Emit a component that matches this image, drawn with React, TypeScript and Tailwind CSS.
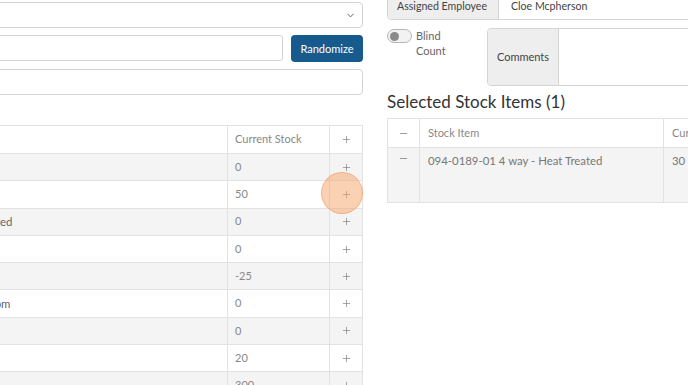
import { ChevronDown, Plus, Minus } from 'lucide-react'

const rows = [
  { name: '094-0101 Pallet', stock: '0' },
  { name: '094-0142 Pallet', stock: '50' },
  { name: '094-0189-01 4 way - Heat Treated', stock: '0' },
  { name: '094-0190', stock: '0' },
  { name: '094-0201', stock: '-25' },
  { name: '094-0189-02 4-way Pallet Bottom', stock: '0' },
  { name: '094-0310', stock: '0' },
  { name: '094-0311', stock: '20' },
  { name: '094-0400', stock: '300' },
]

export default function App() {
  return (
    <div className="relative w-[688px] h-[385px] overflow-hidden bg-white font-['Lato','Open_Sans',sans-serif] text-[#555]">
      <div className="flex ml-[-171px] w-[1100px]">
        {/* Left column */}
        <div className="w-[534px] shrink-0 pt-[2px]">
          <div className="h-[26px] border border-[#d4d4d4] rounded-[4px] flex items-center justify-end pr-[6px]">
            <ChevronDown className="h-[11px] w-[11px] text-[#555]" strokeWidth={2} />
          </div>
          <div className="mt-[7px] flex gap-[8px]">
            <div className="flex-1 h-[26px] border border-[#d4d4d4] rounded-[3px]" />
            <button className="w-[72px] h-[27px] rounded-[4px] bg-[#175a8e] text-white text-[11px] leading-none">
              Randomize
            </button>
          </div>
          <div className="mt-[7px] h-[26px] border border-[#d4d4d4] rounded-[4px]" />

          <div className="mt-[30px] border border-[#e2e2e2]">
            <div className="flex h-[28px] bg-white border-b border-[#e2e2e2]">
              <div className="flex-1" />
              <div className="w-[102px] border-l border-[#e2e2e2] flex items-center pl-[7px] text-[11px] text-[#888]">
                Current Stock
              </div>
              <div className="w-[33px] border-l border-[#e2e2e2] flex items-center justify-center text-[#777]">
                <Plus className="h-[11px] w-[11px]" strokeWidth={1.4} />
              </div>
            </div>
            {rows.map((r, i) => (
              <div
                key={i}
                className={`flex h-[27.3px] border-b border-[#e2e2e2] ${i % 2 === 0 ? 'bg-[#f4f4f4]' : 'bg-white'}`}
              >
                <div className="flex-1 flex items-center pl-[8px] text-[11.4px] text-[#666] whitespace-nowrap">
                  {r.name}
                </div>
                <div className="w-[102px] border-l border-[#e2e2e2] flex items-center pl-[7px] text-[11px] text-[#888]">
                  {r.stock}
                </div>
                <div className="w-[33px] border-l border-[#e2e2e2] flex items-center justify-center text-[#777]">
                  <Plus className="h-[11px] w-[11px]" strokeWidth={1.4} />
                </div>
              </div>
            ))}
          </div>
        </div>

        {/* Right column */}
        <div className="ml-[24px] w-[440px] shrink-0 mt-[-6px]">
          <div className="flex h-[26px] border border-[#d4d4d4] rounded-[4px] text-[10.6px] text-[#444]">
            <div className="w-[111px] bg-[#eeeeee] border-r border-[#d4d4d4] flex items-center pl-[9px] rounded-l-[4px]">
              Assigned Employee
            </div>
            <div className="flex-1 flex items-center pl-[12px]">Cloe Mcpherson</div>
          </div>

          <div className="mt-[8px] flex">
            <div className="w-[100px] flex items-start">
              <div className="mt-[1px] w-[25px] h-[14px] rounded-full border border-[#b5b5b5] bg-[#f2f2f2] flex items-center pl-[2px]">
                <div className="w-[9px] h-[9px] rounded-full bg-[#8a8a8a]" />
              </div>
              <div className="ml-[4px] text-[11px] leading-[15px] text-[#666]">
                <div>Blind</div>
                <div>Count</div>
              </div>
            </div>
            <div className="flex h-[58px] flex-1 border border-[#d4d4d4] rounded-[4px]">
              <div className="w-[71px] bg-[#eeeeee] border-r border-[#d4d4d4] rounded-l-[4px] flex items-center justify-center text-[11px] text-[#444]">
                Comments
              </div>
              <div className="flex-1" />
            </div>
          </div>

          <h2 className="mt-[5px] text-[17px] leading-[22px] text-[#333] font-normal">Selected Stock Items (1)</h2>

          <div className="mt-[5px] border border-[#e2e2e2]">
            <div className="flex h-[29px] border-b border-[#e2e2e2] bg-white">
              <div className="w-[31px] flex items-center justify-center text-[#777]">
                <Minus className="h-[11px] w-[11px]" strokeWidth={1.6} />
              </div>
              <div className="w-[244px] border-l border-[#e2e2e2] flex items-center pl-[8px] text-[11px] text-[#888]">
                Stock Item
              </div>
              <div className="flex-1 border-l border-[#e2e2e2] flex items-center pl-[8px] text-[11px] text-[#888]">
                Current Stock
              </div>
            </div>
            <div className="flex h-[54px] bg-[#f4f4f4]">
              <div className="w-[31px] flex justify-center pt-[5px] text-[#777]">
                <Minus className="h-[11px] w-[11px]" strokeWidth={1.6} />
              </div>
              <div className="w-[244px] border-l border-[#e2e2e2] pl-[8px] pt-[4px] text-[11.4px] text-[#777] whitespace-nowrap">
                094-0189-01 4 way - Heat Treated
              </div>
              <div className="flex-1 border-l border-[#e2e2e2] pl-[8px] pt-[4px] text-[11.4px] text-[#777]">30</div>
            </div>
          </div>
        </div>
      </div>

      {/* click highlight */}
      <div className="absolute left-[321px] top-[172px] w-[42px] h-[42px] rounded-full bg-[#f7a46a]/50 border border-[#f2a46e]/70" />
    </div>
  )
}
